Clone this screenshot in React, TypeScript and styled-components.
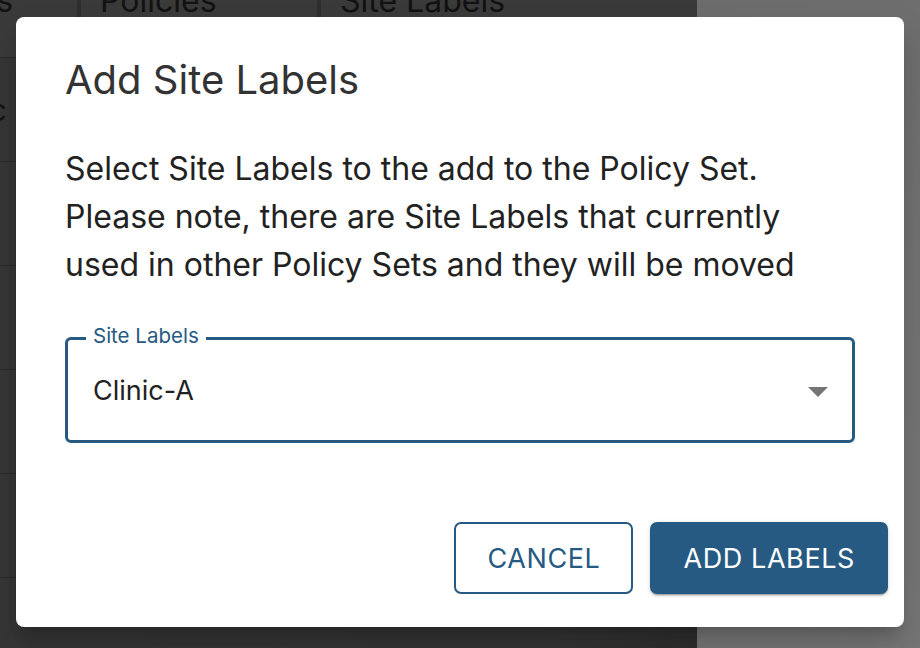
import styled, { createGlobalStyle } from "styled-components";

const GlobalStyle = createGlobalStyle`
  html, body {
    margin: 0;
    padding: 0;
    width: 920px;
    height: 648px;
    overflow: hidden;
    font-family: Inter, "Noto Sans", sans-serif;
  }
`;

const BLUE = "#265a82";

const rows = ["Basic Labels", "", "", "", "", ""];

// page behind the dialog
const Page = styled.div`
  display: grid;
  grid-template-columns: 697px 1fr;
  width: 920px;
  height: 648px;
  overflow: hidden;
`;

const TablePane = styled.div`
  background: linear-gradient(90deg, #363636, #343434 80%, #2e2e2e);
  overflow: hidden;
`;

const SidePane = styled.div`
  background: linear-gradient(160deg, #6c6c6c, #747474 50%, #777 100%);
`;

const HeadRow = styled.div`
  display: grid;
  grid-template-columns: 77px 4px 236px 4px 1fr;
  height: 57px;
  background: #3a3a3a;
  border-bottom: 1px solid #2c2c2c;
`;

const HeadCell = styled.div<{ $pad?: number }>`
  font-size: 32px;
  color: #121212;
  line-height: 32px;
  margin-top: -15px;
  padding-left: ${(p) => (p.$pad ?? 19)}px;
  text-indent: ${(p) => (p.$pad === 0 ? "-152px" : "0")};
  white-space: nowrap;
  overflow: hidden;
`;

const ColSep = styled.div`
  background: #2f2f2f;
`;

const BodyRow = styled.div`
  height: 103px;
  border-bottom: 1px solid #2c2c2c;
  display: flex;
  align-items: center;
  font-size: 30px;
  color: #121212;
  white-space: nowrap;
  overflow: hidden;
`;

const RowText = styled.span`
  margin-left: -70px;
`;

// dialog
const Dialog = styled.div`
  position: absolute;
  left: 16px;
  top: 17px;
  width: 888px;
  height: 610px;
  box-sizing: border-box;
  background: #fff;
  border-radius: 8px;
  box-shadow: 0 11px 15px -7px rgba(0, 0, 0, 0.2), 0 24px 38px 3px rgba(0, 0, 0, 0.14);
  padding: 39px 49px 0 49px;
  display: flex;
  flex-direction: column;
`;

const Title = styled.h2`
  margin: 0;
  font-size: 40px;
  font-weight: 400;
  color: #333;
  line-height: 48px;
`;

const Body = styled.p`
  margin: 41px 0 0 0;
  font-size: 32px;
  line-height: 48px;
  color: #222;
`;

const Field = styled.div`
  margin-top: 48px;
  height: 106px;
  box-sizing: border-box;
  border: 3px solid ${BLUE};
  border-radius: 6px;
  padding: 0 24px 0 25px;
  display: flex;
  align-items: center;
  justify-content: space-between;
  position: relative;
`;

const FloatLabel = styled.span`
  position: absolute;
  left: 18px;
  top: -16px;
  padding: 0 7px;
  background: #fff;
  font-size: 20.5px;
  line-height: 24px;
  color: ${BLUE};
`;

const Value = styled.span`
  font-size: 27px;
  color: #222;
`;

const Caret = styled.svg`
  margin-top: 4px;
`;

const Actions = styled.div`
  margin-top: auto;
  margin-bottom: 33px;
  margin-right: -33px;
  display: flex;
  justify-content: flex-end;
  gap: 17px;
`;

const Button = styled.button<{ $primary?: boolean }>`
  height: 72px;
  box-sizing: border-box;
  padding: 0 31px;
  font-family: Inter, "Noto Sans", sans-serif;
  font-size: 27px;
  font-weight: 400;
  letter-spacing: 0.6px;
  text-transform: uppercase;
  border-radius: 7px;
  cursor: pointer;
  border: 2px solid ${BLUE};
  color: ${(p) => (p.$primary ? "#fff" : BLUE)};
  background: ${(p) => (p.$primary ? BLUE : "#fff")};
  box-shadow: ${(p) =>
    p.$primary
      ? "0 3px 1px -2px rgba(0,0,0,0.2), 0 2px 2px 0 rgba(0,0,0,0.14), 0 1px 5px 0 rgba(0,0,0,0.12)"
      : "none"};
`;

export default function App() {
  return (
    <>
      <GlobalStyle />
      <Page>
        <TablePane>
          <HeadRow>
            <HeadCell $pad={0}>Site Labels</HeadCell>
            <ColSep />
            <HeadCell>Policies</HeadCell>
            <ColSep />
            <HeadCell>Site Labels</HeadCell>
          </HeadRow>
          {rows.map((r, i) => (
            <BodyRow key={i}>
              <RowText>{r}</RowText>
            </BodyRow>
          ))}
        </TablePane>
        <SidePane />
      </Page>
      <Dialog role="dialog">
        <Title>Add Site Labels</Title>
        <Body>
          Select Site Labels to the add to the Policy Set. Please note, there are Site Labels
          that currently used in other Policy Sets and they will be moved
        </Body>
        <Field>
          <FloatLabel>Site Labels</FloatLabel>
          <Value>Clinic-A</Value>
          <Caret width="20" height="10" viewBox="0 0 20 10">
            <path d="M0 0 L20 0 L10 10 Z" fill="#757575" />
          </Caret>
        </Field>
        <Actions>
          <Button>Cancel</Button>
          <Button $primary>Add Labels</Button>
        </Actions>
      </Dialog>
    </>
  );
}
